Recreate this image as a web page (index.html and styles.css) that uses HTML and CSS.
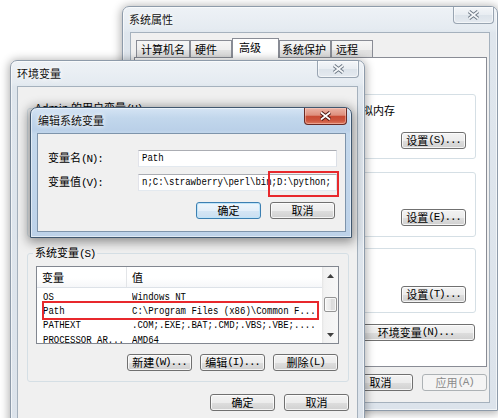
FILE: index.html
```html
<!DOCTYPE html>
<html lang="zh-CN">
<head>
<meta charset="utf-8">
<title>系统属性</title>
<link rel="stylesheet" href="styles.css">
</head>
<body>
<div class="desk">

  <div class="win win-sys">
    <div class="titlebar">
      <span class="title">系统属性</span>
      <span class="close cl-sys"><svg class="x" width="13" height="10" viewBox="0 0 13 10"><path class="xo" d="M2 1.5L11 8.5M11 1.5L2 8.5"/><path class="xi" d="M2 1.5L11 8.5M11 1.5L2 8.5"/></svg></span>
    </div>
    <div class="client sys-client">
      <div class="tabs">
        <div class="tab t1">计算机名</div>
        <div class="tab t2">硬件</div>
        <div class="tab t3 sel">高级</div>
        <div class="tab t4">系统保护</div>
        <div class="tab t5">远程</div>
      </div>
      <div class="panel">
        <div class="note occluded">要进行大多数改动，您必须作为管理员登录。</div>
        <fieldset class="grp sg g1">
          <legend class="occluded">性能</legend>
          <div class="gtext">视觉效果，处理器计划，内存使用，以及虚拟内存</div>
          <div class="brow"><button type="button" class="btn">设置<span class="a">(S)...</span></button></div>
        </fieldset>
        <fieldset class="grp sg g2">
          <legend class="occluded">用户配置文件</legend>
          <div class="gtext occluded">与您登录有关的桌面设置</div>
          <div class="brow"><button type="button" class="btn">设置<span class="a">(E)...</span></button></div>
        </fieldset>
        <fieldset class="grp sg g3">
          <legend class="occluded">启动和故障恢复</legend>
          <div class="gtext occluded">系统启动、系统失败和调试信息</div>
          <div class="brow"><button type="button" class="btn">设置<span class="a">(T)...</span></button></div>
        </fieldset>
        <div class="brow envbtn"><button type="button" class="btn wide">环境变量<span class="a">(N)...</span></button></div>
      </div>
      <div class="foot sys-foot">
        <button type="button" class="btn occluded">确定</button>
        <button type="button" class="btn">取消</button>
        <button type="button" class="btn dis">应用<span class="a">(A)</span></button>
      </div>
    </div>
  </div>

  <div class="win win-env">
    <div class="titlebar">
      <span class="title">环境变量</span>
      <span class="close cl-env"><svg class="x" width="13" height="10" viewBox="0 0 13 10"><path class="xo" d="M2 1.5L11 8.5M11 1.5L2 8.5"/><path class="xi" d="M2 1.5L11 8.5M11 1.5L2 8.5"/></svg></span>
    </div>
    <div class="client env-client">
      <fieldset class="grp eg">
        <legend>Admin 的用户变量<span class="a">(U)</span></legend>
        <div class="list occluded"></div>
        <div class="brow lbtns occluded">
          <button type="button" class="btn">新建<span class="a">(N)...</span></button>
          <button type="button" class="btn">编辑<span class="a">(E)...</span></button>
          <button type="button" class="btn">删除<span class="a">(D)</span></button>
        </div>
      </fieldset>
      <fieldset class="grp eg eg2">
        <legend>系统变量<span class="a">(S)</span></legend>
        <div class="list">
          <div class="lv">
            <div class="lhead"><div class="c1">变量</div><div class="c2">值</div></div>
            <div class="lbody">
              <div class="row"><div class="c1"><div class="sx">OS</div></div><div class="c2"><div class="sx">Windows NT</div></div></div>
              <div class="row"><div class="c1"><div class="sx">Path</div></div><div class="c2"><div class="sx">C:\Program Files (x86)\Common F...</div></div></div>
              <div class="row"><div class="c1"><div class="sx">PATHEXT</div></div><div class="c2"><div class="sx">.COM;.EXE;.BAT;.CMD;.VBS;.VBE;....</div></div></div>
              <div class="row"><div class="c1"><div class="sx">PROCESSOR_AR...</div></div><div class="c2"><div class="sx">AMD64</div></div></div>
            </div>
          </div>
          <div class="sb">
            <div class="sbb"><svg width="7" height="4" viewBox="0 0 7 4"><path d="M0 4L3.5 0L7 4Z" fill="#3f3f3f"/></svg></div>
            <div class="sbt"><div class="thumb"></div></div>
            <div class="sbb"><svg width="7" height="4" viewBox="0 0 7 4"><path d="M0 0L3.5 4L7 0Z" fill="#3f3f3f"/></svg></div>
          </div>
          <div class="hl hl-row"></div>
        </div>
        <div class="brow lbtns">
          <button type="button" class="btn">新建<span class="a">(W)...</span></button>
          <button type="button" class="btn">编辑<span class="a">(I)...</span></button>
          <button type="button" class="btn">删除<span class="a">(L)</span></button>
        </div>
      </fieldset>
      <div class="foot env-foot">
        <button type="button" class="btn">确定</button>
        <button type="button" class="btn">取消</button>
      </div>
    </div>
  </div>

  <div class="win win-edit active">
    <div class="titlebar">
      <span class="title">编辑系统变量</span>
      <span class="close cl-edit"><svg class="x" width="13" height="10" viewBox="0 0 13 10"><path class="xo" d="M2 1.5L11 8.5M11 1.5L2 8.5"/><path class="xi" d="M2 1.5L11 8.5M11 1.5L2 8.5"/></svg></span>
    </div>
    <div class="client edit-client">
      <div class="frow">
        <span class="flabel">变量名<span class="a">(N):</span></span>
        <div class="field"><div class="inp"><div class="sx">Path</div></div></div>
      </div>
      <div class="frow">
        <span class="flabel">变量值<span class="a">(V):</span></span>
        <div class="field"><div class="inp"><div class="sx">n;C:\strawberry\perl\bin;D:\python;</div></div><div class="hl hl-inp"></div></div>
      </div>
      <div class="foot edit-foot">
        <button type="button" class="btn def">确定</button>
        <button type="button" class="btn">取消</button>
      </div>
    </div>
  </div>

</div>
</body>
</html>
```
FILE: styles.css
```css
* { box-sizing: border-box; }
html, body { margin: 0; padding: 0; background: #fff; }
body {
  font-family: "Noto Sans CJK SC", "Noto Sans", sans-serif;
  font-size: 11px;
  line-height: 13px;
  color: #000;
}
.desk { position: relative; width: 498px; height: 418px; overflow: hidden; background: #fff; }

/* content fully covered by a window lying on top */
.occluded { visibility: hidden; }

/* mnemonic / ascii parts (SimSun-like half width) */
.a {
  font-family: "Liberation Mono", monospace;
  font-size: 11px;
  letter-spacing: -1.2px;
}
/* monospace values, narrowed to 5.4px per character */
.sx {
  font-family: "Liberation Mono", monospace;
  font-size: 11px;
  white-space: pre;
  transform: scaleX(0.818);
  transform-origin: 0 50%;
}

/* ---------- window frames ---------- */
.win {
  position: absolute;
  display: flex;
  flex-direction: column;
  border: 1px solid #8e9baa;
  border-radius: 7px 7px 0 0;
  background: linear-gradient(180deg, #eef2f6 0, #e5ebf1 22px, #dfe6ed 26px, #dce3eb 100%);
  box-shadow: 0 1px 10px 1px rgba(0,0,0,.33), inset 0 0 0 1px rgba(255,255,255,.6);
}
.win.active {
  border-color: #40576f;
  background: linear-gradient(180deg, #d5e4f4 0, #c2d7ec 10px, #bad0e8 22px, #c4d8ec 26px, #bdd2e9 100%);
  box-shadow: 0 2px 11px 2px rgba(0,0,0,.42), inset 0 0 0 1px rgba(255,255,255,.5);
}
.win-sys { z-index: 1; left: 122px; top: 6px; width: 376px; height: 405px; padding: 0 7px 7px; }
.win-env { z-index: 2; left: 10px; top: 60px; width: 355px; height: 380px; padding: 0 6px 6px; }
.win-edit { z-index: 3; left: 30px; top: 107px; width: 322px; height: 131px; padding: 0 5px 5px 6px; }

.titlebar {
  flex: none;
  height: 25px;
  display: flex;
  justify-content: space-between;
  align-items: flex-start;
}
.title {
  line-height: 25px;
  color: #111;
  white-space: nowrap;
  text-shadow: 0 0 4px #fff, 0 0 6px rgba(255,255,255,.9);
}
.win-sys .title { margin-left: -1px; }
.win-edit .title { margin-left: 1px; }

.close {
  flex: none;
  height: 17px;
  display: flex;
  align-items: center;
  justify-content: center;
  border: 1px solid #99a5b2;
  border-top: 0;
  border-radius: 0 0 4px 4px;
  background: linear-gradient(180deg, #f4f6f9 0, #e8edf2 48%, #dce3ea 52%, #e5eaf0 100%);
  box-shadow: inset 0 0 0 1px rgba(255,255,255,.55);
}
.cl-sys { width: 41px; margin-right: -4px; }
.cl-env { width: 42px; margin-right: -1px; }
.cl-edit {
  width: 43px;
  margin-right: -1px;
  border-color: #6a2a24;
  background: linear-gradient(180deg, #ebb3a5 0, #de8f7d 45%, #c84b34 52%, #cd573f 80%, #de7c62 100%);
  box-shadow: inset 0 0 0 1px rgba(255,215,205,.45);
}
.x .xo { fill: none; stroke: #6f7a87; stroke-width: 3.6; }
.x .xi { fill: none; stroke: #f6f8fa; stroke-width: 1.6; }
.cl-edit .x .xo { stroke: #4b1712; }
.cl-edit .x .xi { stroke: #fff; }

.client {
  flex: 1;
  min-height: 0;
  display: flex;
  flex-direction: column;
  background: #f0f0f0;
  border: 1px solid #a5b1bd;
}
.win.active .client { border-color: #7e94ab; }

/* ---------- buttons ---------- */
.btn {
  flex: none;
  width: 65px;
  height: 17px;
  padding: 0;
  margin: 0;
  display: flex;
  align-items: center;
  justify-content: center;
  white-space: nowrap;
  font-family: "Noto Sans CJK SC", "Noto Sans", sans-serif;
  font-size: 11px;
  line-height: 13px;
  color: #000;
  border: 1px solid #707070;
  border-radius: 3px;
  background: linear-gradient(180deg, #f3f3f3 0, #ececec 50%, #dedede 51%, #d0d0d0 100%);
  box-shadow: inset 0 0 0 1px rgba(255,255,255,.75);
  -webkit-appearance: none;
  appearance: none;
}
.btn.def {
  border-color: #3c7fb1;
  background: linear-gradient(180deg, #eef6fc 0, #e4eff9 50%, #d5e6f5 51%, #cbdff1 100%);
  box-shadow: inset 0 0 0 1px #bfe4f9;
}
.btn.dis {
  border-color: #adb2b5;
  background: #f4f4f4;
  color: #8a8a8a;
  box-shadow: none;
}
.btn.wide { width: 118px; }

.brow { display: flex; justify-content: flex-end; }
.foot { flex: none; display: flex; justify-content: flex-end; gap: 9px; }

/* ---------- group boxes ---------- */
.grp {
  margin: 0;
  min-width: 0;
  border: 1px solid #d5dfe5;
  border-radius: 3px;
}
.grp legend { padding: 0 2px; margin-left: -3px; line-height: 13px; white-space: nowrap; }

/* ---------- system properties ---------- */
.sys-client { padding: 7px 2px 11px 3px; }
.tabs { flex: none; display: flex; align-items: flex-end; height: 18px; padding-left: 2px; }
.tab {
  flex: none;
  height: 18px;
  border: 1px solid #898c95;
  border-bottom: 0;
  line-height: 17px;
  padding-left: 4px;
  white-space: nowrap;
  background: linear-gradient(180deg, #f6f6f6 0, #eeeeee 50%, #e3e3e3 51%, #dadada 100%);
}
.t1 { width: 54px; }
.t2 { width: 42px; }
.t3 { width: 47px; padding-left: 6px; }
.t4 { width: 52px; padding-left: 2px; }
.t5 { width: 42px; }
.tab.sel { height: 20px; background: #fff; position: relative; z-index: 2; }
.panel {
  flex: none;
  position: relative;
  z-index: 1;
  margin-top: -1px;
  background: #fff;
  border: 1px solid #898c95;
  padding: 12px 10px 25px 8px;
}
.note { height: 13px; white-space: nowrap; }
.sg { padding: 3px 9px 9px 9px; }
.g1 { margin-top: 5px; }
.g2 { margin-top: 7px; padding-bottom: 10px; }
.g3 { margin-top: 5px; }
.gtext { height: 13px; white-space: nowrap; }
.sg .brow { margin-top: 15px; }
.g2 .brow { margin-top: 14px; }
.envbtn { margin-top: 11px; padding-right: 1px; }
.sys-foot { margin-top: 7px; }

/* ---------- environment variables ---------- */
.env-client { padding: 14px 8px 0 9px; }
.eg { padding: 5px 9px 10px 8px; }
.eg2 { margin-top: 9px; }
.lbtns { margin-top: 10px; gap: 8px; padding-right: 1px; }
.env-foot { margin-top: 12px; }

.list {
  position: relative;
  height: 78px;
  border: 1px solid #828790;
  background: #fff;
  display: flex;
}
.lv { flex: 1; min-width: 0; overflow: hidden; }
.lhead {
  display: flex;
  height: 21px;
  border-bottom: 1px solid #dde2e8;
  background: linear-gradient(180deg, #fff 0, #fff 55%, #f6f7f9 100%);
}
.lhead .c1 { width: 90px; flex: none; border-right: 1px solid #e3e5e8; padding-left: 5px; line-height: 20px; }
.lhead .c2 { flex: 1; padding-left: 5px; line-height: 20px; }
.lbody { padding-top: 2px; }
.row { display: flex; height: 14px; }
.row .c1 { width: 90px; flex: none; padding-left: 6px; overflow: hidden; }
.row .c2 { flex: 1; min-width: 0; padding-left: 5px; overflow: hidden; }
.row .sx { line-height: 14px; }
.row:last-child { padding-top: 1px; }

.sb {
  flex: none;
  width: 16px;
  display: flex;
  flex-direction: column;
  background: linear-gradient(90deg, #e4e4e4 0, #f2f2f2 2px, #f7f7f7 100%);
}
.sbb { flex: none; height: 17px; display: flex; align-items: center; justify-content: center; }
.sbt { flex: 1; display: flex; justify-content: center; }
.thumb {
  margin-top: 13px;
  width: 13px;
  height: 15px;
  border: 1px solid #959595;
  border-radius: 2px;
  background: linear-gradient(90deg, #f5f5f5 0, #e8e8e8 50%, #dadada 51%, #e3e3e3 100%);
  box-shadow: inset 0 0 0 1px rgba(255,255,255,.7);
}

/* ---------- edit dialog ---------- */
.edit-client { padding: 16px 8px 12px 10px; }
.frow { flex: none; display: flex; align-items: center; height: 17px; }
.frow + .frow { margin-top: 7px; }
.flabel { width: 90px; flex: none; white-space: nowrap; }
.field { flex: 1; min-width: 0; position: relative; height: 17px; }
.inp {
  height: 17px;
  border: 1px solid #abadb3;
  border-color: #abadb3 #dbdfe6 #e3e9ef #e2e3ea;
  background: #fff;
  padding-left: 3px;
  overflow: hidden;
}
.inp .sx { line-height: 15px; }

.edit-foot { margin-top: 11px; padding-right: 2px; }

/* ---------- red annotation boxes ---------- */
.hl { position: absolute; border: 2px solid #e8282c; pointer-events: none; z-index: 3; }
.hl-inp { left: 130px; top: -3px; width: 71px; height: 26px; }
.hl-row { left: 5px; top: 34px; width: 277px; height: 19px; }
```
